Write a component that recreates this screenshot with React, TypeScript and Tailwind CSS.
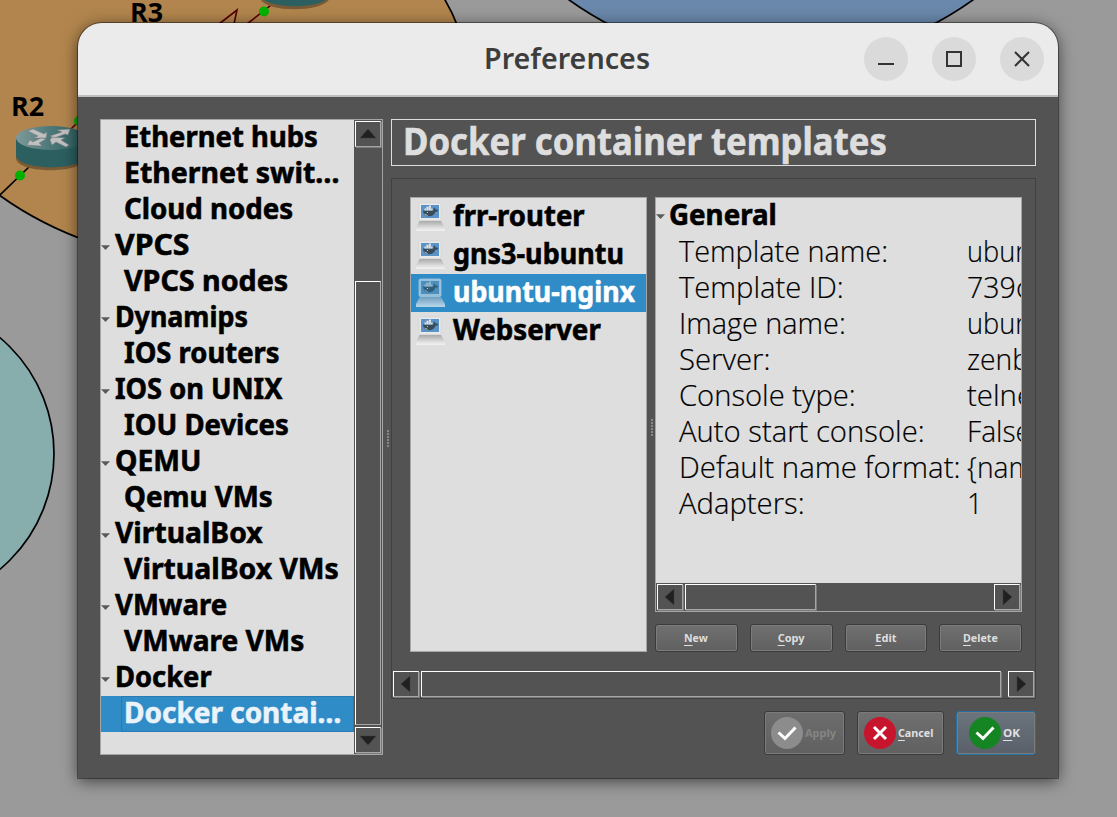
import React, { useLayoutEffect, useRef, useState } from "react";

const tree: [string, number, number][] = [
  ["Ethernet hubs", 1, 194], ["Ethernet swit…", 1, 216], ["Cloud nodes", 1, 169], ["VPCS", 0, 74],
  ["VPCS nodes", 1, 164], ["Dynamips", 0, 133], ["IOS routers", 1, 156], ["IOS on UNIX", 0, 167],
  ["IOU Devices", 1, 165], ["QEMU", 0, 86], ["Qemu VMs", 1, 149], ["VirtualBox", 0, 148],
  ["VirtualBox VMs", 1, 215], ["VMware", 0, 112], ["VMware VMs", 1, 180], ["Docker", 0, 97],
  ["Docker contai…", 1, 217],
];

const templates: [string, number][] = [["frr-router", 132], ["gns3-ubuntu", 171], ["ubuntu-nginx", 182], ["Webserver", 148]];

const details: [string, number, string, number][] = [
  ["Template name:", 209, "ubuntu-nginx", 164], ["Template ID:", 165, "739c4e1a", 126],
  ["Image name:", 167, "ubuntu-nginx", 164], ["Server:", 91, "zenbook", 109],
  ["Console type:", 177, "telnet", 76], ["Auto start console:", 246, "False", 64],
  ["Default name format:", 282, "{name}-{0}", 137], ["Adapters:", 126, "1", 16],
];

function Fit({ text, width, className = "" }: { text: React.ReactNode; width: number; className?: string }) {
  const ref = useRef<HTMLSpanElement>(null);
  const [scale, setScale] = useState(1);
  useLayoutEffect(() => {
    if (ref.current) setScale(width / ref.current.offsetWidth);
  }, [width]);
  return (
    <span ref={ref} className={"inline-block origin-left whitespace-pre " + className} style={{ transform: `scaleX(${scale})` }}>
      {text}
    </span>
  );
}

const Caret = () => (
  <svg width="9" height="5" className="shrink-0"><path d="M0 .3H9L4.5 5Z" fill="#5b5b5b" /></svg>
);

function Arrow({ dir }: { dir: "up" | "down" | "left" | "right" }) {
  const paths = { up: "M5 17H21L13 8Z", down: "M5 9H21L13 18Z", left: "M17 5V21L8 13Z", right: "M9 5V21L18 13Z" };
  return (
    <div className="h-[26px] w-[26px] shrink-0 border border-t-white border-l-white border-r-[#a5a5a5] border-b-[#a5a5a5] shadow-[1px_1px_0_#7b7b7b]">
      <svg width="24" height="24" viewBox="1 1 24 24"><path d={paths[dir]} fill="#202020" stroke="#3d3d3d" strokeWidth=".5" /></svg>
    </div>
  );
}

function Computer({ selected }: { selected: boolean }) {
  return (
    <svg width="31" height="30" viewBox="0 0 31 30" className="shrink-0">
      <defs>
        <linearGradient id="base" x2="0" y2="1"><stop stopColor="#aaa" /><stop offset=".65" stopColor="#ddd" /><stop offset="1" stopColor="#f3f3f3" /></linearGradient>
        <linearGradient id="baseSel" x2="0" y2="1"><stop stopColor="#6f9fbf" /><stop offset="1" stopColor="#b8d7e9" /></linearGradient>
      </defs>
      <rect x="4" y="1" width="22" height="17.5" rx="1.5" fill={selected ? "#96bfd9" : "#e9e9e9"} stroke={selected ? "#a9cbdf" : "#d3d3d3"} strokeWidth=".7" />
      <rect x="6" y="3" width="18" height="13" fill={selected ? "#4c8fbd" : "#5a93c8"} />
      <path d="M4.500 19H26L30 26V29H1V26Z" fill={selected ? "url(#baseSel)" : "url(#base)"} />
      <path d="M8 8.500H18.500Q17.800 6.500 19.300 5.500Q20.700 6.500 20.600 7.800Q22.500 7.100 23.300 8.200Q22.300 9.800 20.500 9.700Q18.500 14.500 13.500 14.300Q8.300 14.200 8 8.500Z" fill={selected ? "#315f7b" : "#394b56"} />
      <path d="M9.500 6.500H17.500V8.500H9.500ZM11 4.800H16V6.500H11ZM14 3.500H16V5H14Z" fill={selected ? "#8db9d4" : "#dce4e9"} />
      <path d="M11.500 5V8.500M13.700 5V8.500M15.900 5V8.500" stroke="#7995a7" strokeWidth=".4" />
      <path d="M9 11.500Q12 12 13.500 14.200Q10 13.700 9 11.500Z" fill={selected ? "#79a5bf" : "#b9c8d1"} />
      <circle cx="12.500" cy="10.500" r=".6" fill="#d7e0e5" />
    </svg>
  );
}

function Router() {
  return (
    <g>
      <path d="M0 12V31C4 46 64 46 70 31V12Z" fill="#7a5b36" transform="translate(0 2)" />
      <path d="M0 12V30C4 45 66 45 70 30V12Z" fill="#2b5f60" />
      <ellipse cx="35" cy="12" rx="35" ry="12" fill="url(#routerTop)" />
      <path d="M12 5L17 3L28 8L31 6L30 12L18 12L22 10ZM34 10L46 6L41 4L54 3L52 9L49 8L38 12ZM30 13L23 17L26 20L11 19L14 14L17 16L25 12ZM34 14L36 11L49 12L45 14L53 19L50 21L40 16L36 19Z" fill="#c0c0c0" stroke="#777" strokeWidth=".4" />
    </g>
  );
}

function Backdrop() {
  return (
    <svg width="1117" height="817" className="absolute inset-0">
      <defs><linearGradient id="routerTop"><stop stopColor="#7f9a9b" /><stop offset=".5" stopColor="#4b7777" /><stop offset="1" stopColor="#2b6061" /></linearGradient></defs>
      <path d="M-5 -5H440Q452 10 459 27L460 240H84Q38 224 -5 192Z" fill="#b1854d" />
      <path d="M442 -5Q451 9 458 27M90 242Q38 224 -5 192" fill="none" stroke="#000" strokeWidth="1.7" />
      <path d="M565 -3Q655 63 771 63T977 -3Z" fill="#6a88ab" stroke="#000" strokeWidth="1.7" />
      <circle cx="-97" cy="453.500" r="151" fill="#87adad" stroke="#000" strokeWidth="1.7" />
      <path d="M0 195L30 166" stroke="#000" strokeWidth="1.7" />
      <path d="M60 140L82 118M247 24L280 -2M219 24L237 10L234 24" fill="none" stroke="#560000" strokeWidth="1.6" />
      <g transform="translate(16 126)"><Router /></g>
      <g transform="translate(260 -35)"><Router /></g>
      <circle cx="20" cy="175.500" r="5" fill="#00b200" /><circle cx="79" cy="121" r="5" fill="#00b200" /><circle cx="264" cy="11.500" r="5" fill="#00b200" />
      <text x="11" y="115.500" className="font-['Open_Sans'] text-[26px] font-bold" textLength="33" lengthAdjust="spacingAndGlyphs">R2</text>
      <text x="130" y="21.500" className="font-['Open_Sans'] text-[26px] font-bold" textLength="33" lengthAdjust="spacingAndGlyphs">R3</text>
    </svg>
  );
}

const small = "text-[11px] leading-4 font-bold";
const heavy = "[-webkit-text-stroke:0.6px_currentColor]";
const thumb = "h-[26px] border border-t-white border-l-white border-r-[#a5a5a5] border-b-[#a5a5a5] shadow-[1px_1px_0_#7b7b7b]";

function Button({ label, width }: { label: string; width: number }) {
  return (
    <button className="flex h-7 w-[83px] items-center justify-center rounded-[3px] border border-[#3b3b3b] bg-linear-to-b from-[#707070] to-[#606060] text-[#dedede] shadow-[inset_0_0_0_1px_#7c7c7c]">
      <Fit className={small + " origin-center"} width={width} text={<><span className="underline underline-offset-[3px]">{label[0]}</span>{label.slice(1)}</>} />
    </button>
  );
}

function Action({ label, kind, width }: { label: string; kind: "apply" | "cancel" | "ok"; width: number }) {
  const style = {
    apply: "w-[81px] pl-[6px] border-[#3b3b3b] from-[#6d6d6d] to-[#606060] text-[#858585]",
    cancel: "w-[87px] pl-[6px] border-[#3b3b3b] from-[#707070] to-[#606060] text-[#e0e0e0]",
    ok: "w-[80px] pl-[12px] border-[#226fa4] from-[#6b757d] to-[#596069] text-[#e0e0e0]",
  }[kind];
  return (
    <button className={"flex h-11 items-center gap-[2px] rounded-[3px] border bg-linear-to-b shadow-[inset_0_0_0_1px_#7b7b7b] " + style}>
      <svg width="32" height="32" viewBox="0 0 32 32" className="shrink-0">
        <circle cx="16" cy="16" r="16" fill={{ apply: "#8c8c8c", cancel: "#c7152d", ok: "#148522" }[kind]} />
        <path d={kind === "cancel" ? "M10 10L22 22M22 10L10 22" : "M7.500 15.500L14 21.500L24.500 10.500"} fill="none" stroke="white" strokeWidth="3" />
      </svg>
      <Fit className={small} width={width} text={kind === "apply" ? label : <><span className="underline underline-offset-[3px]">{label[0]}</span>{label.slice(1)}</>} />
    </button>
  );
}

function Grip() {
  return <svg width="2" height="18" className="shrink-0"><path d="M0 1H2M0 4H2M0 7H2M0 10H2M0 13H2M0 16H2" stroke="#999" strokeWidth="1.500" /></svg>;
}

export default function App() {
  return (
    <div className="relative h-[817px] w-[1117px] overflow-hidden bg-[#9a9a9a] font-['Noto_Sans','Open_Sans',sans-serif]">
      <Backdrop />
      <main className="absolute top-[23px] left-[78px] flex h-[755px] w-[980px] flex-col overflow-hidden rounded-t-[24px] bg-[#535353] shadow-[0_0_0_1px_#0006,0_3px_16px_#0009]">
        <header className="flex h-[74px] shrink-0 items-center justify-end border-b-2 border-[#bebebe] bg-[#ebebeb] pr-[14px] text-[#3d3d3d]">
          <div className="mr-[214px] h-10 w-[166px] text-[28px] leading-10 font-semibold"><Fit text="Preferences" width={166} className="-translate-y-px" /></div>
          <div className="flex gap-6">
            {["M14 27H30", "M15 15H29V29H15Z", "M15 15L29 29M29 15L15 29"].map((d) => (
              <button key={d} className="h-11 w-11 rounded-full bg-[#dadada]"><svg width="44" height="44"><path d={d} fill="none" stroke="#333" strokeWidth="2" /></svg></button>
            ))}
          </div>
        </header>
        <div className="flex h-[636px] w-[958px] pt-[22px] pl-[22px]">
          <aside className="flex h-[636px] w-[283px] shrink-0 border border-[#a5a5a5] bg-[#dedede]">
            <div className="w-[253px] shrink-0 text-[29px] leading-9 font-bold">
              {tree.map(([name, level, width], i) => (
                <div key={name} className={"flex h-9 items-center " + (i === 16 ? "bg-[#308cc6] text-[#ebf3fa]" : "")}>
                  {level === 0 ? <div className="flex h-9 w-[13px] items-center pt-0.5"><Caret /></div> : <div className="w-5" />}
                  <div className={"h-9 grow " + (i === 16 ? "pl-[3px] shadow-[inset_0_0_0_1px_#287cb1]" : level ? "pl-[3px]" : "pl-px")}><Fit text={name} width={width} className={heavy + " -translate-y-[2px]"} /></div>
                </div>
              ))}
            </div>
            <div className="flex w-7 flex-col bg-[#535353] pt-px pl-px">
              <Arrow dir="up" />
              <div className="mt-[134px] h-[444px] w-[26px] border border-t-white border-l-white border-r-[#a5a5a5] border-b-[#a5a5a5]" />
              <div className="mt-[2px]"><Arrow dir="down" /></div>
            </div>
          </aside>
          <div className="flex w-2 shrink-0 items-center justify-center pt-[26px] pl-[2px]"><Grip /></div>
          <section className="h-[636px] w-[645px] shrink-0">
            <h1 className="h-[47px] border border-[#dedede] pl-[11px] text-[37px] leading-[42px] font-bold text-[#dedede]"><Fit text="Docker container templates" width={484} className={heavy} /></h1>
            <div className="mt-3 flex h-[521px] flex-col border border-[#404040]">
              <div className="flex h-[456px] pt-[18px] pl-[18px]">
                <div className="h-[455px] w-[237px] shrink-0 border border-[#a5a5a5] bg-[#dedede]">
                  {templates.map(([name, width], i) => (
                    <div key={name} className={"flex h-[38px] items-center gap-[7px] pl-1 text-[29px] leading-[38px] font-bold " + (i === 2 ? "bg-[#308cc6] text-white" : "")}>
                      <Computer selected={i === 2} /><Fit text={name} width={width} className={heavy + " -mt-0.5 -translate-y-px"} />
                    </div>
                  ))}
                </div>
                <div className="flex h-[456px] w-2 shrink-0 items-center justify-center pt-[5px] pl-[2px]"><Grip /></div>
                <div className="h-[456px] w-[367px] shrink-0">
                  <div className="h-[415px] border border-[#a5a5a5] bg-[#dedede] text-[29px] leading-9">
                    <div className="h-[385px] overflow-hidden">
                      <div className="flex h-9 items-center font-bold"><Caret /><Fit text="General" width={108} className={heavy + " -mt-0.5 ml-[4px] -translate-y-px"} /></div>
                      {details.map(([label, width, value, valueWidth]) => (
                        <div key={label} className="flex h-9 pl-[23px]">
                          <div className="w-[288px] shrink-0"><Fit text={label} width={width} className="-translate-y-px font-['Open_Sans'] font-light [-webkit-text-stroke:0.2px_currentColor]" /></div>
                          <Fit text={value} width={valueWidth} className="-translate-y-px font-['Open_Sans'] font-light [-webkit-text-stroke:0.2px_currentColor]" />
                        </div>
                      ))}
                    </div>
                    <div className="flex h-7 bg-[#535353] pt-px pl-px">
                      <Arrow dir="left" /><div className={thumb + " ml-[2px] w-[131px]"} /><div className="ml-[178px]"><Arrow dir="right" /></div>
                    </div>
                  </div>
                  <div className="mt-3 flex gap-3"><Button label="New" width={24} /><Button label="Copy" width={27} /><Button label="Edit" width={21} /><Button label="Delete" width={35} /></div>
                </div>
              </div>
              <div className="mt-[36px] flex pl-px"><Arrow dir="left" /><div className={thumb + " ml-[2px] w-[580px]"} /><div className="ml-[7px]"><Arrow dir="right" /></div></div>
            </div>
            <div className="mt-3 flex justify-end gap-3"><Action label="Apply" kind="apply" width={31} /><Action label="Cancel" kind="cancel" width={35} /><Action label="OK" kind="ok" width={17} /></div>
          </section>
        </div>
      </main>
    </div>
  );
}
